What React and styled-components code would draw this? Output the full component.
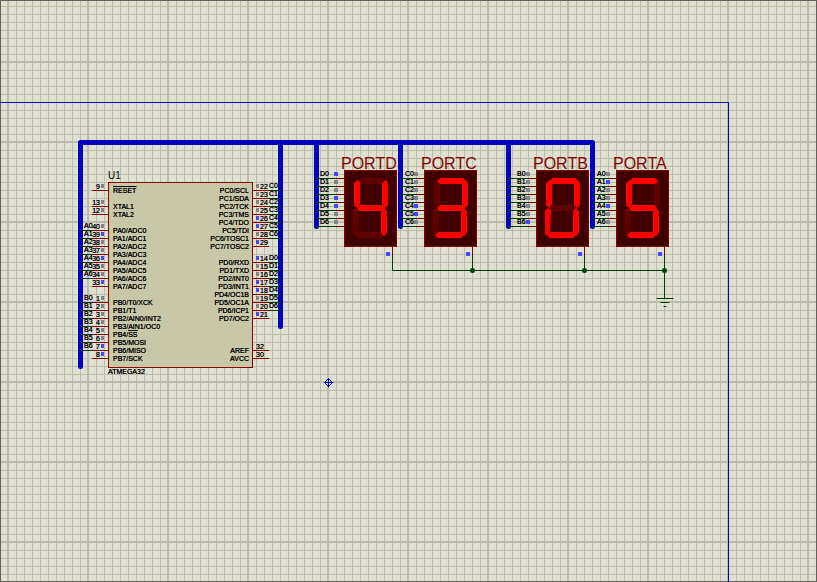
import React from "react";
import styled, { createGlobalStyle } from "styled-components";

const color = {
  paper: "#e0e0d0",
  grid: "#bcbcac",
  frame: "#646060",
  bus: "#0000bf",
  edge: "#0000c8",
  wire: "#004000",
  pin: "#880000",
  body: "#c8c8a8",
  ink: "#000000",
  high: "#4646ff",
  low: "#848484",
  lit: "#ff0000",
  unlit: "#600000",
  panel: "#400000",
};

const GlobalStyle = createGlobalStyle`
  * { box-sizing: border-box; }
  body {
    margin: 0;
    background: ${color.paper};
    color: ${color.ink};
    font-family: "Liberation Sans", Arial, sans-serif;
  }
  ul, h1, h2 { margin: 0; padding: 0; list-style: none; font-weight: 400; }
`;

const Sheet = styled.main`
  position: relative;
  min-height: 100vh;
  overflow: hidden;
  outline: 1px solid ${color.frame};
  outline-offset: -1px;
  background-color: ${color.paper};
  background-image:
    linear-gradient(${color.grid} 2px, transparent 2px),
    linear-gradient(90deg, ${color.grid} 2px, transparent 2px),
    linear-gradient(${color.grid} 1px, transparent 1px),
    linear-gradient(90deg, ${color.grid} 1px, transparent 1px);
  background-size: 80px 80px, 80px 80px, 8px 8px, 8px 8px;
  background-position: 0 61px, 7px 0, 0 6px, 0 0;
`;

const Wiring = styled.svg`
  position: absolute;
  inset: 0;
  width: 100%;
  height: 100%;
  fill: none;
`;

const Node = styled.section`
  position: absolute;
  left: ${(p) => p.$x}px;
  top: ${(p) => p.$y}px;
  text-shadow: 0 0 currentColor;
`;

const ChipNode = styled(Node)`
  display: grid;
  grid-template-columns: 28px auto 28px;
`;

const Reference = styled.h1`
  grid-column: 2;
  font-size: 10px;
  line-height: 12px;
  text-shadow: none;
`;

const PartName = styled.p`
  grid-column: 2;
  margin: 0;
  font-size: 7px;
  line-height: 8px;
`;

const ChipBody = styled.div`
  display: flex;
  justify-content: space-between;
  width: 145px;
  padding: 4px 3px 4px 4px;
  border: 1px solid ${color.pin};
  background: ${color.body};
`;

const PinNames = styled.ul`
  font-size: 7px;
  line-height: 8px;
  text-align: ${(p) => p.$align};
  white-space: nowrap;

  li { height: 8px; }
`;

const Barred = styled.span`
  text-decoration: overline;
`;

const Leads = styled.ul`
  grid-column: ${(p) => (p.$side === "right" ? 3 : 1)};
  padding-top: 1px;
`;

const Lead = styled.li`
  display: flex;
  flex-direction: ${(p) => (p.$side === "right" ? "row-reverse" : "row")};
  height: 8px;
  font-size: 7px;
  line-height: 8px;
  white-space: nowrap;
`;

const NetSpan = styled.span`
  width: 12px;
  height: 8px;
  padding-left: ${(p) => (p.$side === "right" ? 0 : 4)}px;
  border-bottom: 1px solid ${(p) => (p.$wired ? color.wire : "transparent")};
  line-height: 6px;
`;

const PinSpan = styled.span`
  display: flex;
  flex-direction: ${(p) => (p.$side === "right" ? "row-reverse" : "row")};
  justify-content: flex-end;
  gap: 1px;
  width: 16px;
  height: 8px;
  padding: ${(p) => (p.$side === "right" ? "0 0 0 3px" : "0 4px 0 0")};
  border-bottom: 1px solid ${color.pin};
`;

const PinNumber = styled.span`
  min-width: 8px;
  text-align: ${(p) => (p.$side === "right" ? "left" : "right")};
`;

const State = styled.i`
  flex: none;
  width: ${(p) => p.$size || 4}px;
  height: 4px;
  margin-top: 1px;
  background: ${(p) => (p.$high ? color.high : color.low)};
`;

const DisplayNode = styled(Node)`
  display: grid;
  grid-template-columns: ${(p) => p.$lead}px 53px;
`;

const DisplayTitle = styled.h2`
  grid-column: 2;
  height: 16px;
  margin-left: -3px;
  color: ${color.pin};
  font-size: 16px;
  line-height: 20px;
  text-shadow: none;
  white-space: nowrap;
`;

const SegmentLead = styled.li`
  display: flex;
  justify-content: flex-end;
  height: 8px;
  padding-right: 6px;
  background: linear-gradient(90deg, ${color.wire} calc(100% - 7px), ${color.pin} 0) bottom / 100% 1px no-repeat;
  font-size: 7px;
  line-height: 6px;
`;

const SegmentNet = styled.span`
  width: ${(p) => p.$width}px;
`;

const Panel = styled.div`
  height: 77px;
  border: 1px solid ${color.pin};
  background: ${color.panel};

  svg { display: block; margin: -1px; }
`;

const CommonLead = styled.div`
  grid-column: 2;
  display: flex;
  align-items: flex-end;
  width: 49px;
  height: 9px;
  padding-left: 42px;
  background: linear-gradient(${color.pin}, ${color.pin}) right top / 1px 8px no-repeat;
`;

const range = (prefix, first, step, levels, names, nets = 7) =>
  names.map((name, i) => ({
    name,
    number: first + i * step,
    high: levels[i] === "1",
    net: i < nets ? `${prefix}${i}` : null,
  }));

const leftPins = [
  { name: <Barred>RESET</Barred>, number: 9 },
  null,
  { name: "XTAL1", number: 13 },
  { name: "XTAL2", number: 12 },
  null,
  ...range("A", 40, -1, "01001001",
    [0, 1, 2, 3, 4, 5, 6, 7].map((n) => `PA${n}/ADC${n}`)),
  null,
  ...range("B", 1, 1, "00000011", [
    "PB0/T0/XCK", "PB1/T1", "PB2/AIN0/INT2", "PB3/AIN1/OC0",
    <>PB4/<Barred>SS</Barred></>, "PB5/MOSI", "PB6/MISO", "PB7/SCK",
  ]),
];

const rightPins = [
  ...range("C", 22, 1, "00001101", [
    "PC0/SCL", "PC1/SDA", "PC2/TCK", "PC3/TMS",
    "PC4/TDO", "PC5/TDI", "PC6/TOSC1", "PC7/TOSC2",
  ]),
  null,
  ...range("D", 14, 1, "10011001", [
    "PD0/RXD", "PD1/TXD", "PD2/INT0", "PD3/INT1",
    "PD4/OC1B", "PD5/OC1A", "PD6/ICP1", "PD7/OC2",
  ]),
  null, null, null,
  { name: "AREF", number: 32, power: true },
  { name: "AVCC", number: 30, power: true },
];

const displays = [
  { title: "PORTD", net: "D", x: 316, lead: 28, netWidth: 14, levels: "1001100", on: "bcfg" },
  { title: "PORTC", net: "C", x: 400, lead: 24, netWidth: 9, levels: "0000110", on: "abcdg" },
  { title: "PORTB", net: "B", x: 508, lead: 28, netWidth: 9, levels: "0000001", on: "abcdef" },
  { title: "PORTA", net: "A", x: 592, lead: 24, netWidth: 9, levels: "0100100", on: "acdfg" },
];

const segments = {
  e: "12,38 15,40 14,62 11,66 9,64 9,41",
  f: "14,10 16,13 16,34 13,38 10,35 10,13",
  b: "42,10 44,13 44,35 41,38 38,35 38,13",
  c: "40,38 43,41 43,63 40,66 37,63 37,41",
  a: "17,8 39,8 42,11 39,14 16,14 13,11",
  d: "15,62 37,62 40,65 37,68 14,68 11,65",
  g: "16,35 38,35 41,38 38,41 15,41 13,38",
};

function LeadList({ pins, side }) {
  return (
    <Leads $side={side}>
      {pins.map((pin, i) => (
        <Lead key={i} $side={side}>
          {pin && (
            <>
              <NetSpan $side={side} $wired={Boolean(pin.net)}>{pin.net}</NetSpan>
              <PinSpan $side={side}>
                <PinNumber $side={side}>{pin.number}</PinNumber>
                <State as={pin.power ? "span" : "i"} hidden={pin.power} $size={3} $high={pin.high} />
              </PinSpan>
            </>
          )}
        </Lead>
      ))}
    </Leads>
  );
}

function Chip() {
  return (
    <ChipNode $x={80} $y={170}>
      <Reference>U1</Reference>
      <LeadList pins={leftPins} side="left" />
      <ChipBody>
        <PinNames $align="left">
          {leftPins.map((pin, i) => <li key={i}>{pin && pin.name}</li>)}
        </PinNames>
        <PinNames $align="right">
          {rightPins.map((pin, i) => <li key={i}>{pin && pin.name}</li>)}
        </PinNames>
      </ChipBody>
      <LeadList pins={rightPins} side="right" />
      <PartName>ATMEGA32</PartName>
    </ChipNode>
  );
}

function Display({ title, net, x, lead, netWidth, levels, on }) {
  const order = Object.entries(segments).sort(([p], [q]) => on.includes(p) - on.includes(q));
  return (
    <DisplayNode $x={x} $y={154} $lead={lead}>
      <DisplayTitle>{title}</DisplayTitle>
      <Leads $side="left">
        {[...levels].map((level, i) => (
          <SegmentLead key={i}>
            <SegmentNet $width={netWidth}>{net}{i}</SegmentNet>
            <State $high={level === "1"} />
          </SegmentLead>
        ))}
      </Leads>
      <Panel>
        <svg width="53" height="77" viewBox="0 0 53 77" aria-hidden="true">
          {order.map(([name, points]) => (
            <polygon key={name} points={points} fill={on.includes(name) ? color.lit : color.unlit} />
          ))}
        </svg>
      </Panel>
      <CommonLead><State $high /></CommonLead>
    </DisplayNode>
  );
}

export default function App() {
  return (
    <>
      <GlobalStyle />
      <Sheet>
        <Wiring aria-hidden="true">
          <g transform="translate(0.5 0.5)">
            <path d="M0 102H728V4000" stroke={color.edge} />
            <path
              d="M80 366V142H592V226M280 142V326M316 142V226M400 142V226M508 142V226"
              stroke={color.bus}
              strokeWidth="5"
              strokeLinejoin="round"
              strokeLinecap="round"
            />
            <path
              d="M392 254V270H664M472 254V270M584 254V270M664 254V298M656 298H673M660 302H669M663 306H666"
              stroke={color.wire}
            />
            <g fill={color.wire}>
              <circle cx="472" cy="270" r="2.5" />
              <circle cx="584" cy="270" r="2.5" />
              <circle cx="664" cy="270" r="2.5" />
            </g>
            <path d="M328 378V387M324 382H333M328 378L332 382L328 386L324 382Z" stroke={color.edge} />
          </g>
        </Wiring>
        <Chip />
        {displays.map((display) => <Display key={display.title} {...display} />)}
      </Sheet>
    </>
  );
}
